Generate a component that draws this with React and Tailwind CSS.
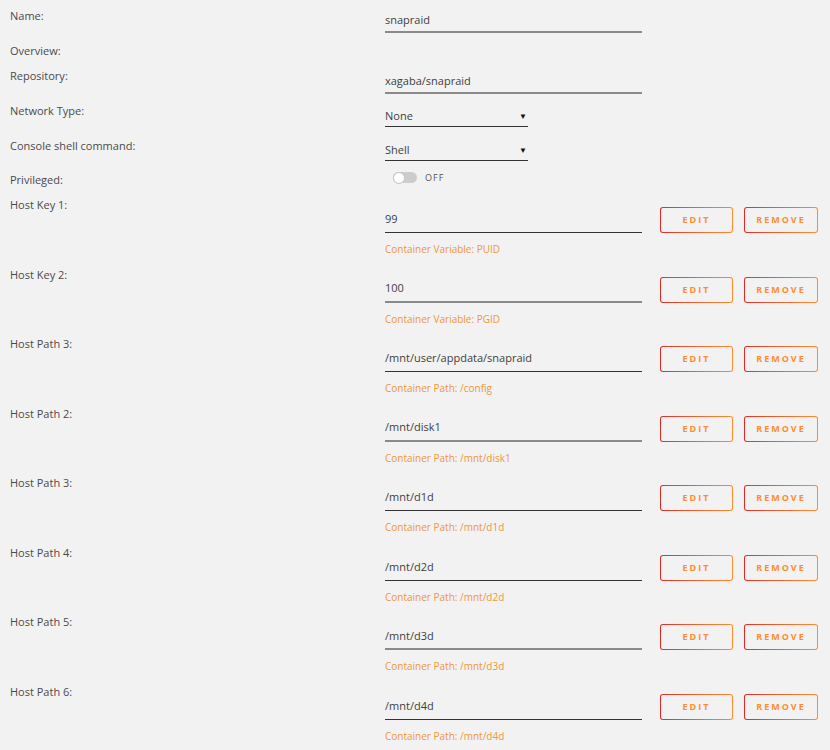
import React from 'react';

const hosts = [
  { label: 'Host Key 1:', value: '99', hint: 'Container Variable: PUID', dark: true },
  { label: 'Host Key 2:', value: '100', hint: 'Container Variable: PGID', dark: false },
  { label: 'Host Path 3:', value: '/mnt/user/appdata/snapraid', hint: 'Container Path: /config', dark: true },
  { label: 'Host Path 2:', value: '/mnt/disk1', hint: 'Container Path: /mnt/disk1', dark: false },
  { label: 'Host Path 3:', value: '/mnt/d1d', hint: 'Container Path: /mnt/d1d', dark: true },
  { label: 'Host Path 4:', value: '/mnt/d2d', hint: 'Container Path: /mnt/d2d', dark: true },
  { label: 'Host Path 5:', value: '/mnt/d3d', hint: 'Container Path: /mnt/d3d', dark: false },
  { label: 'Host Path 6:', value: '/mnt/d4d', hint: 'Container Path: /mnt/d4d', dark: true },
];

function Label({ children }) {
  return <div className="w-[385px] shrink-0 pl-[10px] leading-[14px] text-[#4a4a4a]">{children}</div>;
}

function TextField({ value, dark, className = '' }) {
  const line = dark ? 'border-b border-[#333]' : 'border-b-2 border-[#8a8a8a]';
  return (
    <div className={`w-[257px] flex items-center text-[#3f3f3f] ${line} ${className}`}>{value}</div>
  );
}

function SelectField({ value }) {
  return (
    <div className="w-[143px] h-[21px] flex items-center justify-between border-b border-[#333] text-[#3f3f3f]">
      <span>{value}</span>
      <span className="text-[8px] text-[#111] pr-[1px]">▼</span>
    </div>
  );
}

function GradButton({ children, width }) {
  return (
    <div className={`${width} h-[26px] rounded-[3px] p-px bg-gradient-to-r from-[#e22828] to-[#ff8c2f]`}>
      <div className="h-full w-full rounded-[2px] bg-[#f2f2f2] flex items-center justify-center text-[9px] font-bold tracking-[2px] text-[#ff8c2f]">
        {children}
      </div>
    </div>
  );
}

export default function App() {
  return (
    <div
      className="w-[830px] h-[750px] overflow-hidden bg-[#f2f2f2] text-[11px]"
      style={{ fontFamily: '"Open Sans", "Noto Sans", sans-serif' }}
    >
      {/* Name */}
      <div className="flex h-[37px]">
        <div className="pt-[9px]"><Label>Name:</Label></div>
        <div className="pt-[10px]">
          <TextField value="snapraid" className="h-[23px]" />
        </div>
      </div>

      {/* Overview */}
      <div className="flex h-[25px] pt-[7px]">
        <Label>Overview:</Label>
      </div>

      {/* Repository */}
      <div className="flex h-[35px]">
        <div className="pt-[7px]"><Label>Repository:</Label></div>
        <div className="pt-[8px]">
          <TextField value="xagaba/snapraid" className="h-[24px]" />
        </div>
      </div>

      {/* Network Type */}
      <div className="flex h-[35px]">
        <div className="pt-[7px]"><Label>Network Type:</Label></div>
        <div className="pt-[9px]"><SelectField value="None" /></div>
      </div>

      {/* Console */}
      <div className="flex h-[34px]">
        <div className="pt-[7px]"><Label>Console shell command:</Label></div>
        <div className="pt-[8px]"><SelectField value="Shell" /></div>
      </div>

      {/* Privileged */}
      <div className="flex h-[25px]">
        <div className="pt-[7px]"><Label>Privileged:</Label></div>
        <div className="pt-[5px] pl-[8px] flex items-center gap-[8px] h-fit">
          <div className="w-[24px] h-[11px] rounded-full bg-[#ccc] flex items-center">
            <div className="w-[12px] h-[12px] rounded-full bg-white border border-[#c4c4c4]" />
          </div>
          <span className="text-[9px] tracking-[1px] text-[#555]">OFF</span>
        </div>
      </div>

      {/* Host entries */}
      {hosts.map((h, i) => (
        <div key={i} className="flex h-[69.5px] shrink-0">
          <div className="pt-[7px]"><Label>{h.label}</Label></div>
          <div className="pt-[16px]">
            <div className="flex items-start">
              <TextField value={h.value} dark={h.dark} className="h-[26px]" />
              <div className="flex gap-[11px] ml-[18px]">
                <GradButton width="w-[73px]">EDIT</GradButton>
                <GradButton width="w-[74px]">REMOVE</GradButton>
              </div>
            </div>
            <div className="mt-[9px] leading-[14px] text-[10px] text-[#f0963c]">{h.hint}</div>
          </div>
        </div>
      ))}
    </div>
  );
}
